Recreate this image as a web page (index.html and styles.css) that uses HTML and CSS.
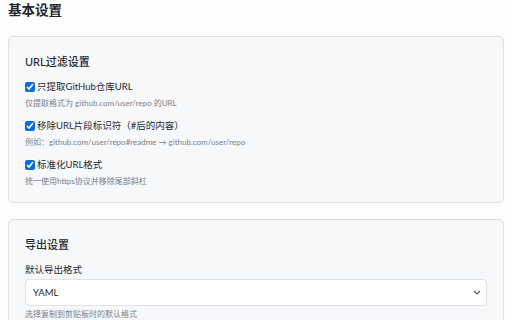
FILE: index.html
```html
<!DOCTYPE html>
<html lang="zh-CN">
<head>
    <meta charset="UTF-8">
    <meta name="viewport" content="width=device-width, initial-scale=1.0">
    <title>设置</title>
    <link rel="stylesheet" href="styles.css">
</head>
<body>
    <h2 class="page-title">基本设置</h2>

    <div class="card">
        <h3>URL过滤设置</h3>

        <div class="option">
            <label><input type="checkbox" checked> 只提取GitHub仓库URL</label>
            <div class="hint">仅提取格式为 github.com/user/repo 的URL</div>
        </div>

        <div class="option">
            <label><input type="checkbox" checked> 移除URL片段标识符（#后的内容）</label>
            <div class="hint">例如：github.com/user/repo#readme → github.com/user/repo</div>
        </div>

        <div class="option">
            <label><input type="checkbox" checked> 标准化URL格式</label>
            <div class="hint">统一使用https协议并移除尾部斜杠</div>
        </div>
    </div>

    <div class="card">
        <h3>导出设置</h3>

        <div class="field">
            <div class="field-label">默认导出格式</div>
            <div class="select-wrap">
                <select>
                    <option selected>YAML</option>
                    <option>JSON</option>
                    <option>Markdown</option>
                </select>
                <svg class="chevron" width="8" height="5" viewBox="0 0 8 5">
                    <path d="M1 1 L4 4 L7 1" fill="none" stroke="#555" stroke-width="1.1"/>
                </svg>
            </div>
            <div class="hint">选择复制到剪贴板时的默认格式</div>
        </div>
    </div>
</body>
</html>
```

FILE: styles.css
```css
body {
    font-family: Lato, "Noto Sans CJK SC", sans-serif;
    margin: 0;
    padding: 0 8px;
    background: #fdfdfd;
    color: #24292f;
}
.page-title {
    font-size: 13.5px;
    font-weight: 700;
    line-height: 20px;
    margin: 0 0 16px;
}
.card {
    background: #f6f8fa;
    border: 1px solid #dde1e6;
    border-radius: 5px;
    padding: 16px 16px 14px;
    margin-bottom: 16px;
}
.card h3 {
    font-size: 11px;
    font-weight: 500;
    line-height: 18px;
    margin: 0 0 8px;
}
.option {
    margin-bottom: 8px;
}
.option:last-child {
    margin-bottom: 0;
}
.option label {
    display: flex;
    align-items: center;
    gap: 2px;
    font-size: 9.5px;
    line-height: 16px;
}
.option input {
    width: 10px;
    height: 10px;
    margin: 0;
    accent-color: #0a6cd6;
}
.hint {
    font-size: 8px;
    line-height: 14px;
    color: #7b8189;
    margin-top: 1px;
}
.field-label {
    font-size: 9.5px;
    line-height: 16px;
    margin-bottom: 1px;
}
.select-wrap {
    position: relative;
}
.select-wrap select {
    appearance: none;
    width: 100%;
    height: 27px;
    padding: 0 7px;
    font-family: inherit;
    font-size: 9.5px;
    color: #24292f;
    background: #fff;
    border: 1px solid #dfe2e6;
    border-radius: 4px;
}
.chevron {
    position: absolute;
    right: 6px;
    top: 11px;
}
```
